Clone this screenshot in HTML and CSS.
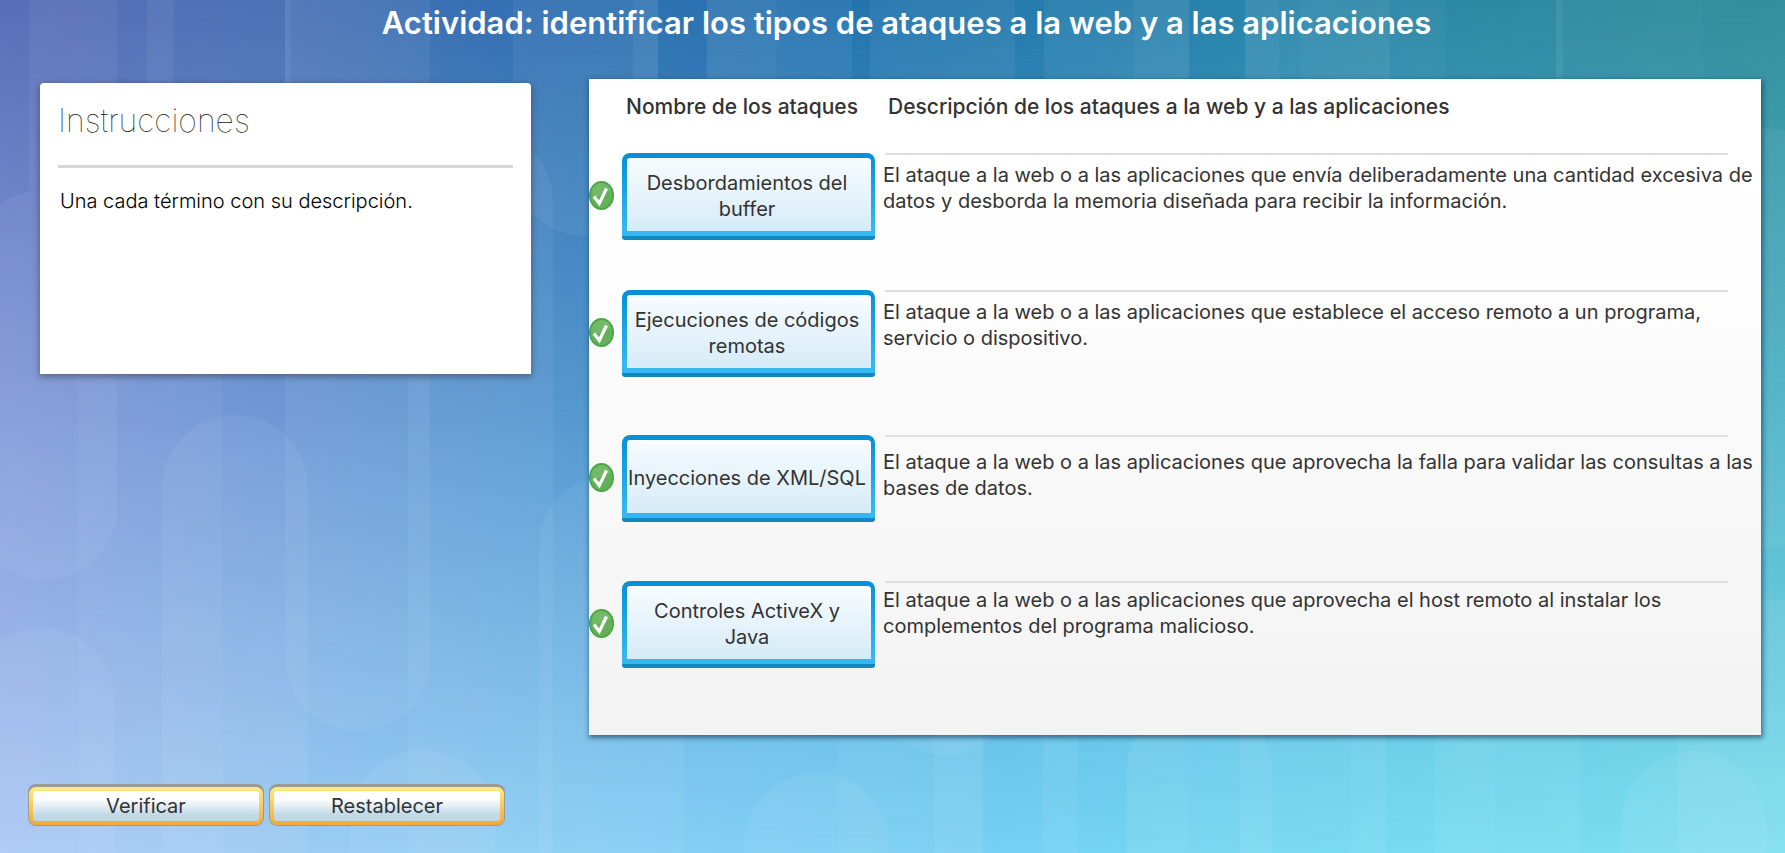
FILE: index.html
```html
<!DOCTYPE html>
<html lang="es">
<head>
<meta charset="utf-8">
<meta name="viewport" content="width=device-width, initial-scale=1">
<title>Actividad: identificar los tipos de ataques</title>
<link rel="stylesheet" href="styles.css">
</head>
<body class="page">
<div class="backdrop" aria-hidden="true">
  <svg class="backdrop-shapes" viewBox="0 0 1785 853" preserveAspectRatio="none" fill="#fff" fill-opacity=".055">
    <rect x="29" y="-80" width="88" height="270"/>
    <rect x="-28" y="190" width="145" height="390" rx="72"/>
    <rect x="78" y="330" width="144" height="600" fill-opacity=".04"/>
    <rect x="147" y="-80" width="27" height="400"/>
    <rect x="162" y="415" width="146" height="600" rx="73"/>
    <rect x="285" y="-80" width="145" height="811" rx="72"/>
    <rect x="285" y="-10" width="6" height="300"/>
    <rect x="-30" y="628" width="145" height="400" rx="72"/>
    <rect x="408" y="130" width="145" height="900" rx="72"/>
    <rect x="350" y="750" width="145" height="300" rx="72"/>
    <rect x="539" y="475" width="145" height="600" rx="72"/>
    <rect x="513" y="-80" width="145" height="316" rx="72"/>
    <rect x="633" y="-10" width="25" height="100"/>
    <rect x="707" y="-80" width="145" height="200"/>
    <rect x="707" y="-80" width="70" height="200" fill-opacity=".03"/>
    <rect x="870" y="-80" width="145" height="200"/>
    <rect x="1044" y="-80" width="145" height="200"/>
    <rect x="1134" y="-80" width="55" height="200" fill-opacity=".04"/>
    <rect x="1245" y="-80" width="145" height="200"/>
    <rect x="1245" y="-80" width="34" height="200" fill-opacity=".04"/>
    <rect x="1300" y="-80" width="145" height="200" fill-opacity=".03"/>
    <rect x="1556" y="-80" width="7" height="200"/>
    <rect x="1556" y="-80" width="146" height="200" fill-opacity=".02"/>
    <rect x="1690" y="128" width="145" height="420" rx="72"/>
    <rect x="744" y="773" width="145" height="300" rx="72"/>
    <rect x="838" y="600" width="145" height="400" fill-opacity=".04"/>
    <rect x="873" y="400" width="145" height="355" rx="72"/>
    <rect x="934" y="600" width="49" height="400"/>
    <rect x="1043" y="600" width="35" height="400"/>
    <rect x="1127" y="700" width="145" height="400" rx="72"/>
    <rect x="1127" y="700" width="61" height="400" fill-opacity=".03"/>
    <rect x="1240" y="700" width="146" height="400"/>
    <rect x="1350" y="700" width="145" height="400" fill-opacity=".03"/>
    <rect x="1435" y="700" width="145" height="400"/>
    <rect x="1621" y="751" width="145" height="400" rx="72"/>
    <rect x="1678" y="600" width="145" height="400"/>
  </svg>
</div>

<h1 class="page-title">Actividad: identificar los tipos de ataques a la web y a las aplicaciones</h1>

<main class="activity">
  <section class="instructions">
    <h2 class="instructions-title">Instrucciones</h2>
    <p class="instructions-text">Una cada término con su descripción.</p>
  </section>

  <section class="board">
    <table class="matches">
      <colgroup>
        <col class="col-status">
        <col class="col-term">
        <col>
      </colgroup>
      <thead>
        <tr>
          <th class="head-name" scope="col" colspan="2">Nombre de los ataques</th>
          <th class="head-desc" scope="col">Descripción de los ataques a la web y a las aplicaciones</th>
        </tr>
      </thead>
      <tbody>
        <tr class="match match-first">
          <td><svg class="check" viewBox="0 0 25 29" role="img" aria-label="Correcto"><ellipse cx="12.5" cy="14.5" rx="11.7" ry="13.5" fill="#62b15a" stroke="#4ba645" stroke-width="1.8"/><path d="M3 10A10 12 0 0 1 22 10Q12 12 4 19Z" fill="#fff" fill-opacity=".1"/><path d="M5 15.5 10.3 22.5 17.5 7.5" fill="none" stroke="#fff" stroke-width="3.2"/></svg></td>
          <td><button class="term" type="button">Desbordamientos del buffer</button></td>
          <td class="desc"><p class="desc-text">El ataque a la web o a las aplicaciones que envía deliberadamente una cantidad excesiva de datos y desborda la memoria diseñada para recibir la información.</p></td>
        </tr>
        <tr class="match match-second">
          <td><svg class="check" viewBox="0 0 25 29" role="img" aria-label="Correcto"><ellipse cx="12.5" cy="14.5" rx="11.7" ry="13.5" fill="#62b15a" stroke="#4ba645" stroke-width="1.8"/><path d="M3 10A10 12 0 0 1 22 10Q12 12 4 19Z" fill="#fff" fill-opacity=".1"/><path d="M5 15.5 10.3 22.5 17.5 7.5" fill="none" stroke="#fff" stroke-width="3.2"/></svg></td>
          <td><button class="term" type="button">Ejecuciones de códigos remotas</button></td>
          <td class="desc"><p class="desc-text">El ataque a la web o a las aplicaciones que establece el acceso remoto a un programa, servicio o dispositivo.</p></td>
        </tr>
        <tr class="match match-low">
          <td><svg class="check" viewBox="0 0 25 29" role="img" aria-label="Correcto"><ellipse cx="12.5" cy="14.5" rx="11.7" ry="13.5" fill="#62b15a" stroke="#4ba645" stroke-width="1.8"/><path d="M3 10A10 12 0 0 1 22 10Q12 12 4 19Z" fill="#fff" fill-opacity=".1"/><path d="M5 15.5 10.3 22.5 17.5 7.5" fill="none" stroke="#fff" stroke-width="3.2"/></svg></td>
          <td><button class="term" type="button">Inyecciones de XML/SQL</button></td>
          <td class="desc"><p class="desc-text">El ataque a la web o a las aplicaciones que aprovecha la falla para validar las consultas a las bases de datos.</p></td>
        </tr>
        <tr class="match match-high">
          <td><svg class="check" viewBox="0 0 25 29" role="img" aria-label="Correcto"><ellipse cx="12.5" cy="14.5" rx="11.7" ry="13.5" fill="#62b15a" stroke="#4ba645" stroke-width="1.8"/><path d="M3 10A10 12 0 0 1 22 10Q12 12 4 19Z" fill="#fff" fill-opacity=".1"/><path d="M5 15.5 10.3 22.5 17.5 7.5" fill="none" stroke="#fff" stroke-width="3.2"/></svg></td>
          <td><button class="term" type="button">Controles ActiveX y<br>Java</button></td>
          <td class="desc"><p class="desc-text">El ataque a la web o a las aplicaciones que aprovecha el host remoto al instalar los complementos del programa malicioso.</p></td>
        </tr>
      </tbody>
    </table>
  </section>
</main>

<footer class="actions">
  <button class="action" type="button">Verificar</button>
  <button class="action" type="button">Restablecer</button>
</footer>
</body>
</html>
```
FILE: styles.css
```css
* {
  box-sizing: border-box;
}

.page {
  position: relative;
  display: flex;
  flex-direction: column;
  min-height: 100vh;
  margin: 0;
  font-family: Inter, "Liberation Sans", sans-serif;
  font-size: 20px;
  line-height: 26px;
  color: #333;
}

.backdrop {
  position: absolute;
  inset: 0;
  z-index: -1;
  overflow: hidden;
  background: linear-gradient(90deg, #adc9f6, #9bcdf5 17%, #86cff6 36%, #76d1f4 56%, #74daf3 78%, #82e0f0);
}

.backdrop::before,
.backdrop::after {
  content: "";
  position: absolute;
  inset: 0;
}

.backdrop::before {
  background: linear-gradient(90deg, #869cda, #6f9ad5 16%, #579ad1 32%, #4ca8d3 60%, #52b4ca);
  mask-image: linear-gradient(#000 50%, transparent);
}

.backdrop::after {
  background: linear-gradient(90deg, #5a6db8, #4a72b5 16%, #346fb2 28%, #2273ae 49%, #2985aa 72%, #348f9b);
  mask-image: linear-gradient(#000, transparent 50%);
}

.backdrop-shapes {
  position: absolute;
  z-index: 1;
  width: 100%;
  height: 100%;
}

.page-title {
  margin: 0;
  padding: 4px 0 0 28px;
  font-size: 31px;
  font-weight: 600;
  line-height: 38px;
  text-align: center;
  color: #fff;
}

.activity {
  display: grid;
  grid-template-columns: 491fr 1172fr;
  gap: 58px;
  align-items: start;
  padding: 37px 24px 0 40px;
}

.instructions {
  min-height: 291px;
  margin-top: 4px;
  padding: 18px;
  border-radius: 4px 4px 0 0;
  background: #fff;
  box-shadow: 0 2px 6px 1px rgba(60, 70, 90, .6);
}

.instructions-title {
  margin: 0;
  padding-bottom: 24px;
  border-bottom: 3px solid #d6d6d6;
  font-size: 32px;
  font-weight: 100;
  line-height: 40px;
  color: #111;
}

.instructions-text {
  margin: 0;
  padding: 20px 2px;
  font-weight: 300;
  color: #000;
}

.board {
  min-height: 656px;
  background: linear-gradient(#fff, #fefefe 25%, #f3f3f3);
  box-shadow: 1px 2px 5px 1px rgba(20, 60, 90, .65);
}

.matches {
  width: 100%;
  border-collapse: collapse;
  table-layout: fixed;
}

.col-status {
  width: 33px;
}

.col-term {
  width: 261px;
}

.matches td,
.matches th {
  padding: 0;
  vertical-align: top;
}

.matches .head-name,
.matches .head-desc {
  height: 74px;
  padding-top: 15px;
  font-size: 21px;
  font-weight: 500;
  text-align: left;
}

.matches .head-name {
  padding-left: 37px;
  white-space: nowrap;
}

.matches .head-desc {
  padding-left: 5px;
}

.match {
  height: 146px;
}

.match-first {
  height: 137px;
}

.match-second {
  height: 145px;
}

.check {
  display: block;
  width: 25px;
  height: 29px;
  margin-top: 28px;
}

.term {
  display: block;
  width: 253px;
  min-height: 87px;
  padding: 2px 4px 0 0;
  border: solid transparent;
  border-width: 5px 4px 9px 5px;
  border-radius: 8px 8px 3px 3px;
  background:
    linear-gradient(#f8fcff, #d5ebf7) padding-box,
    linear-gradient(#068fd6, #35b8f2 88%, #35b8f2 95%, #1288bf 96%) border-box;
  font: inherit;
  color: #333;
  white-space: normal;
}

.desc-text {
  margin: 0;
  padding-top: 7px;
}

.match-low .desc-text {
  padding-top: 12px;
}

.match-high .desc-text {
  padding-top: 4px;
}

.desc::before {
  content: "";
  display: block;
  height: 2px;
  margin: 0 33px 0 2px;
  background: #dedede;
}

.actions {
  display: flex;
  gap: 7px;
  padding: 52px 29px 20px;
}

.action {
  width: 234px;
  height: 38px;
  padding: 0;
  border: 4px solid transparent;
  border-radius: 7px;
  background:
    linear-gradient(#fff 25%, #c0d9e6 80%) padding-box,
    linear-gradient(#fdec85, #f3a838) border-box;
  box-shadow: 0 0 0 1px #9b9b94, 0 -2px 0 1px #9b9b94;
  font: inherit;
  color: #333;
}
```
